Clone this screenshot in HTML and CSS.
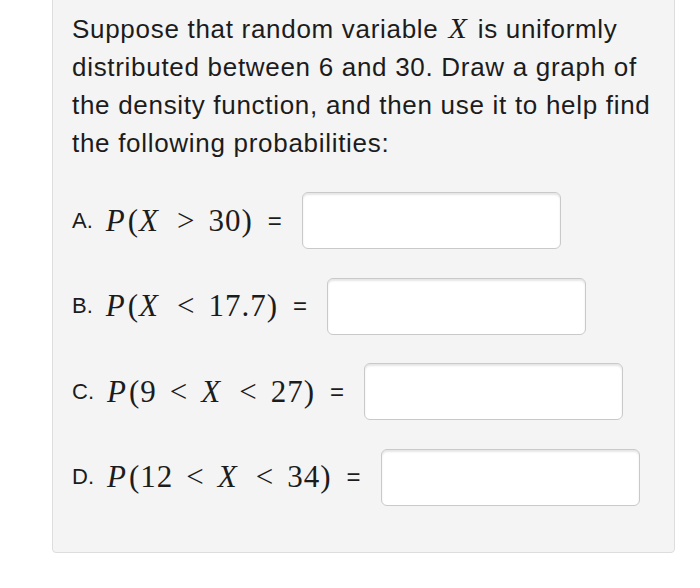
FILE: index.html
```html
<!DOCTYPE html>
<html>
<head>
<meta charset="utf-8">
<link rel="stylesheet" href="styles.css">
</head>
<body>
<div class="panel">
  <p class="question">Suppose that random variable <span class="var">X</span> is uniformly distributed between 6 and 30. Draw a graph of the density function, and then use it to help find the following probabilities:</p>
  <div class="rows">
    <div class="row">
      <span class="label">A.</span>
      <span class="math"><span class="fn">P</span>(<span class="mi">X</span><span class="rel">&gt;</span>30)</span>
      <span class="eq">=</span>
      <span class="answer"></span>
    </div>
    <div class="row">
      <span class="label">B.</span>
      <span class="math"><span class="fn">P</span>(<span class="mi">X</span><span class="rel">&lt;</span>17.7)</span>
      <span class="eq">=</span>
      <span class="answer"></span>
    </div>
    <div class="row">
      <span class="label">C.</span>
      <span class="math"><span class="fn">P</span>(9<span class="rel">&lt;</span><span class="mi">X</span><span class="rel">&lt;</span>27)</span>
      <span class="eq">=</span>
      <span class="answer"></span>
    </div>
    <div class="row">
      <span class="label">D.</span>
      <span class="math"><span class="fn">P</span>(12<span class="rel">&lt;</span><span class="mi">X</span><span class="rel">&lt;</span>34)</span>
      <span class="eq">=</span>
      <span class="answer"></span>
    </div>
  </div>
</div>
</body>
</html>
```
FILE: styles.css
```css
html, body {
  margin: 0;
  padding: 0;
  background: #ffffff;
}
body {
  width: 700px;
  height: 588px;
  overflow: hidden;
}
.panel {
  margin: -4px 0 0 52px;
  width: 623px;
  box-sizing: border-box;
  background: #f4f4f4;
  border: 1px solid #dddddd;
  border-radius: 4px;
  padding: 13px 10px 46px 19px;
  font-family: "Liberation Sans", Arial, sans-serif;
  color: #1c1c1c;
}
.question {
  margin: 0;
  font-size: 26px;
  line-height: 38px;
  letter-spacing: 0.7px;
}
.var {
  display: inline-block;
  font-family: "Liberation Serif", "Times New Roman", serif;
  font-style: italic;
  font-size: 30px;
  line-height: 1;
  letter-spacing: 0;
  padding: 0 3px 0 2px;
}
.rows {
  margin-top: 30px;
  display: flex;
  flex-direction: column;
  gap: 28.5px;
}
.row {
  display: flex;
  align-items: center;
  height: 57px;
}
.label {
  font-size: 22px;
  margin-right: 13px;
}
.math {
  font-family: "Liberation Serif", "Times New Roman", serif;
  font-size: 31px;
  white-space: nowrap;
  letter-spacing: 1px;
}
.fn {
  font-style: italic;
  padding-right: 2px;
}
.mi {
  font-style: italic;
  padding-right: 5px;
}
.rel {
  margin: 0 13px;
}
.eq {
  font-size: 24px;
  margin-left: 15px;
}
.answer {
  display: block;
  width: 259px;
  height: 57px;
  box-sizing: border-box;
  margin-left: 20px;
  background: #ffffff;
  border: 1px solid #c9c9c9;
  border-radius: 6px;
  box-shadow: inset 0 2px 2px rgba(0, 0, 0, 0.1);
}
```
